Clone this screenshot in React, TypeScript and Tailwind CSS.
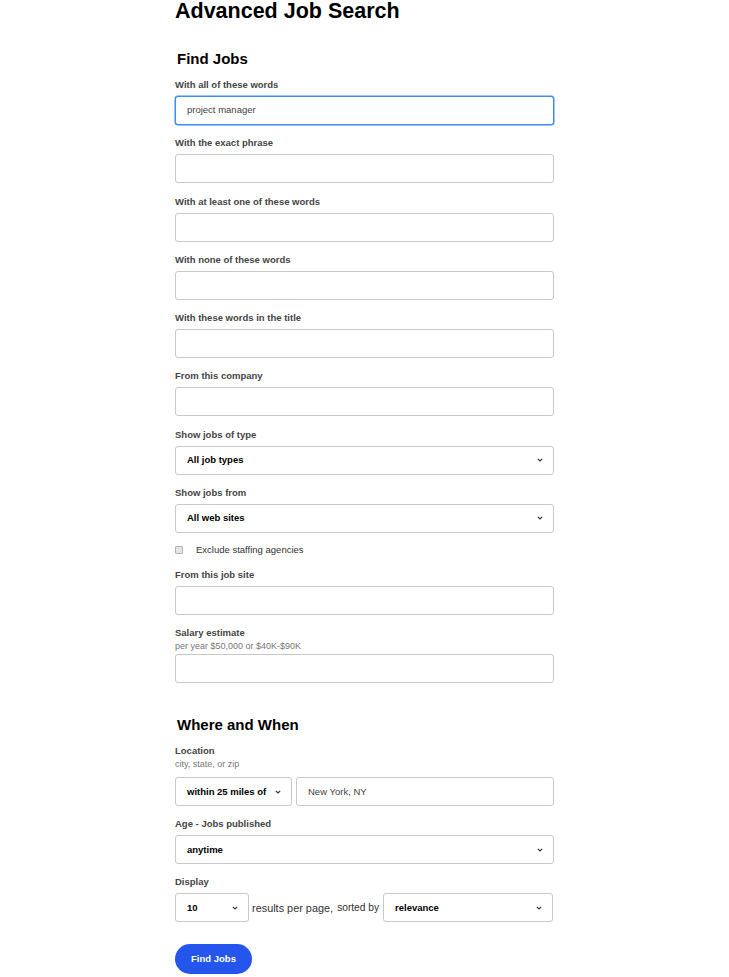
import React from 'react';

const Chevron: React.FC = () => (
  <svg width="6" height="4" viewBox="0 0 6 4" className="shrink-0">
    <path d="M0.8 0.8 L3 3 L5.2 0.8" fill="none" stroke="#333" strokeWidth="1.1" />
  </svg>
);

const Label: React.FC<{ children: React.ReactNode; className?: string }> = ({ children, className = '' }) => (
  <div className={`text-[9.5px] leading-[12px] font-bold text-[#454545] ${className}`}>{children}</div>
);

const Hint: React.FC<{ children: React.ReactNode; className?: string }> = ({ children, className = '' }) => (
  <div className={`text-[9px] leading-[11px] text-[#777] ${className}`}>{children}</div>
);

const TextBox: React.FC<{ value?: string; focused?: boolean; className?: string }> = ({ value, focused, className = '' }) => (
  <div
    className={`h-[29px] flex items-center pl-[11px] rounded-[3px] border bg-white text-[9.5px] text-[#444] ${
      focused ? 'border-[#3b8cf5] shadow-[0_0_0_0.5px_#3b8cf5]' : 'border-[#c9c9c9]'
    } ${className}`}
  >
    {value}
  </div>
);

const Select: React.FC<{ value: string; className?: string }> = ({ value, className = '' }) => (
  <div
    className={`h-[29px] flex items-center justify-between pl-[11px] pr-[10px] rounded-[3px] border border-[#c9c9c9] bg-white text-[9.5px] font-bold text-black ${className}`}
  >
    <span>{value}</span>
    <Chevron />
  </div>
);

export default function App() {
  return (
    <div className="min-h-[977px] bg-white font-['Liberation_Sans',Arial,sans-serif]">
      <div className="mx-auto w-[379px]">
        <h1 className="text-[21.5px] leading-[22px] font-bold text-black">Advanced Job Search</h1>

        <h2 className="mt-[28px] ml-[2px] text-[15px] leading-[18px] font-bold text-black">Find Jobs</h2>

        <Label className="mt-[11px]">With all of these words</Label>
        <TextBox className="mt-[5px]" value="project manager" focused />

        <Label className="mt-[12.25px]">With the exact phrase</Label>
        <TextBox className="mt-[5px]" />

        <Label className="mt-[12.25px]">With at least one of these words</Label>
        <TextBox className="mt-[5px]" />

        <Label className="mt-[12.25px]">With none of these words</Label>
        <TextBox className="mt-[5px]" />

        <Label className="mt-[12.25px]">With these words in the title</Label>
        <TextBox className="mt-[5px]" />

        <Label className="mt-[12.25px]">From this company</Label>
        <TextBox className="mt-[5px]" />

        <Label className="mt-[12.25px]">Show jobs of type</Label>
        <Select className="mt-[5px]" value="All job types" />

        <Label className="mt-[12.25px]">Show jobs from</Label>
        <Select className="mt-[5px]" value="All web sites" />

        <div className="mt-[11.5px] flex items-center h-[12px]">
          <div className="w-[8px] h-[8px] rounded-[1px] border border-[#b5b5b5] bg-[#e6e6e6]" />
          <span className="ml-[13px] text-[9.5px] text-[#333]">Exclude staffing agencies</span>
        </div>

        <Label className="mt-[12.5px]">From this job site</Label>
        <TextBox className="mt-[5.5px]" />

        <Label className="mt-[12px]">Salary estimate</Label>
        <Hint className="mt-[2px]">per year $50,000 or $40K-$90K</Hint>
        <TextBox className="mt-[2px]" />

        <h2 className="mt-[33px] ml-[2px] text-[15px] leading-[18px] font-bold text-black">Where and When</h2>

        <Label className="mt-[11px]">Location</Label>
        <Hint className="mt-[2px]">city, state, or zip</Hint>
        <div className="mt-[7px] flex gap-[4px]">
          <Select className="w-[117px]" value="within 25 miles of" />
          <TextBox className="flex-1" value="New York, NY" />
        </div>

        <Label className="mt-[11.5px]">Age - Jobs published</Label>
        <Select className="mt-[5.5px]" value="anytime" />

        <Label className="mt-[11.5px]">Display</Label>
        <div className="mt-[5.5px] flex items-center">
          <Select className="w-[74px]" value="10" />
          <span className="ml-[3px] text-[10.9px] text-[#333]">results per page,</span>
          <span className="ml-[4px] text-[10.2px] text-[#333]">sorted by</span>
          <Select className="ml-[4px] flex-1 mr-[1px]" value="relevance" />
        </div>

        <button className="mt-[22px] w-[77px] h-[30px] rounded-full bg-[#2456ee] text-white text-[9.5px] font-bold">
          Find Jobs
        </button>
      </div>
    </div>
  );
}
